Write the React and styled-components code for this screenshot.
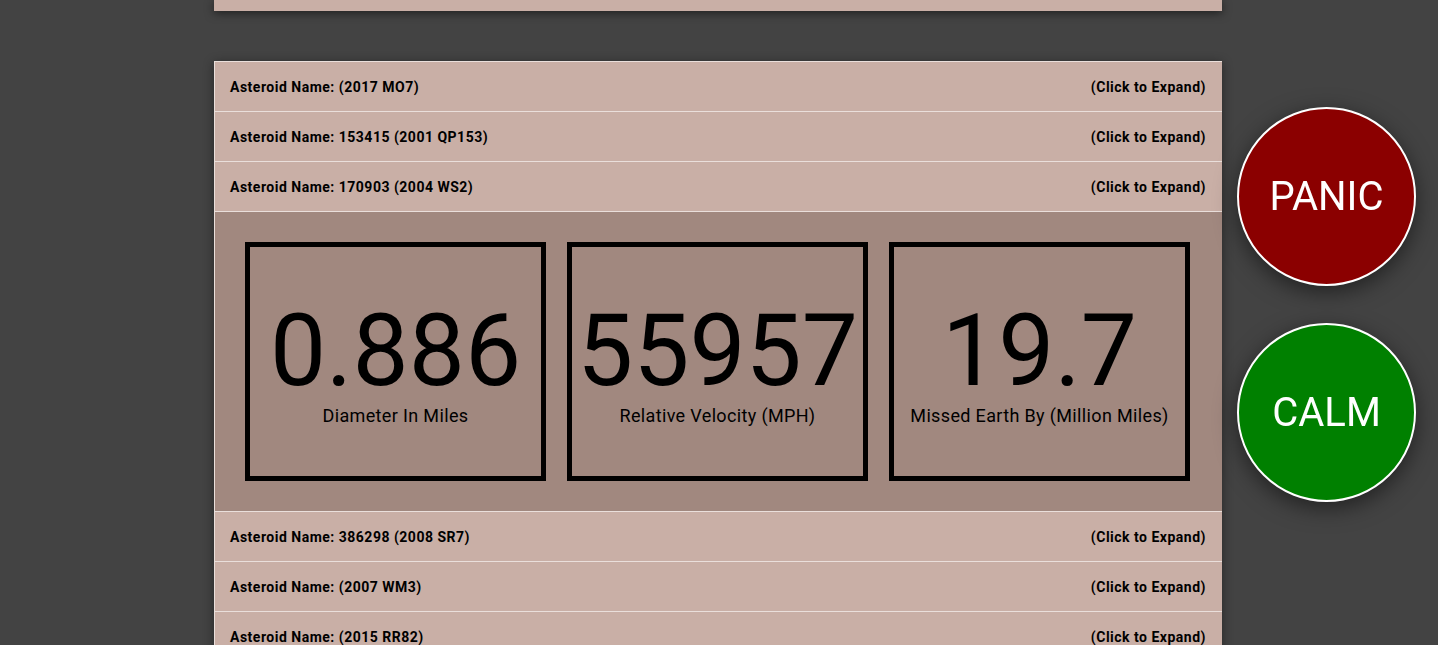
import React from 'react';
import styled, { createGlobalStyle } from 'styled-components';

const GlobalStyle = createGlobalStyle`
  html, body {
    margin: 0;
    padding: 0;
    background: #434343;
    font-family: Roboto, "Liberation Sans", sans-serif;
    overflow: hidden;
  }
`;

const asteroidsBefore = ['(2017 MO7)', '153415 (2001 QP153)', '170903 (2004 WS2)'];
const asteroidsAfter = ['386298 (2008 SR7)', '(2007 WM3)', '(2015 RR82)'];

const stats = [
  { value: '0.886', label: 'Diameter In Miles' },
  { value: '55957', label: 'Relative Velocity (MPH)' },
  { value: '19.7', label: 'Missed Earth By (Million Miles)' },
];

const Row = ({ name }) => (
  <StyledRow>
    <span>Asteroid Name: {name}</span>
    <span>(Click to Expand)</span>
  </StyledRow>
);

const App = () => (
  <Page>
    <GlobalStyle />
    <TopCard />
    <List>
      {asteroidsBefore.map((n) => <Row key={n} name={n} />)}
      <Details>
        {stats.map((s) => (
          <StatBox key={s.label}>
            <Big>{s.value}</Big>
            <Label>{s.label}</Label>
          </StatBox>
        ))}
      </Details>
      {asteroidsAfter.map((n) => <Row key={n} name={n} />)}
    </List>
    <RoundButton color="#8b0000" top={107}>PANIC</RoundButton>
    <RoundButton color="#008000" top={323}>CALM</RoundButton>
  </Page>
);

export default App;

const Page = styled.div`
  height: 645px;
  padding-left: 214px;
`;

const TopCard = styled.div`
  width: 1008px;
  height: 11px;
  background: #c9afa6;
  box-shadow: 0 2px 10px rgba(0, 0, 0, 0.55);
  margin-bottom: 50px;
`;

const List = styled.div`
  width: 1008px;
  background: #c9afa6;
  box-shadow: 0 2px 10px rgba(0, 0, 0, 0.45);
`;

const StyledRow = styled.div`
  height: 49px;
  border-top: 1px solid #eadfdb;
  border-left: 1px solid #eadfdb;
  display: flex;
  justify-content: space-between;
  align-items: center;
  padding: 0 16px 0 15px;
  font-size: 14px;
  letter-spacing: 0.5px;
  font-weight: 700;
  color: #000;
`;

const Details = styled.div`
  height: 300px;
  box-sizing: border-box;
  border-top: 1px solid #eadfdb;
  border-left: 1px solid #eadfdb;
  background: #a1887f;
  display: flex;
  gap: 21px;
  padding: 30px 32px 30px 30px;
`;

const StatBox = styled.div`
  flex: 1;
  box-sizing: border-box;
  border: 5px solid #000;
  display: flex;
  flex-direction: column;
  align-items: center;
  justify-content: center;
  padding-top: 9px;
  color: #000;
`;

const Big = styled.div`
  font-size: 100px;
  line-height: 90px;
`;

const Label = styled.div`
  font-size: 18px;
  letter-spacing: 0.35px;
  line-height: 22px;
  margin-top: 9px;
`;

const RoundButton = styled.div`
  position: fixed;
  left: 1237px;
  top: ${(p) => p.top}px;
  width: 175px;
  height: 175px;
  border-radius: 50%;
  border: 2px solid #fff;
  background: ${(p) => p.color};
  box-shadow: 0 6px 22px rgba(0, 0, 0, 0.5);
  display: flex;
  align-items: center;
  justify-content: center;
  color: #fff;
  font-size: 40px;
`;
